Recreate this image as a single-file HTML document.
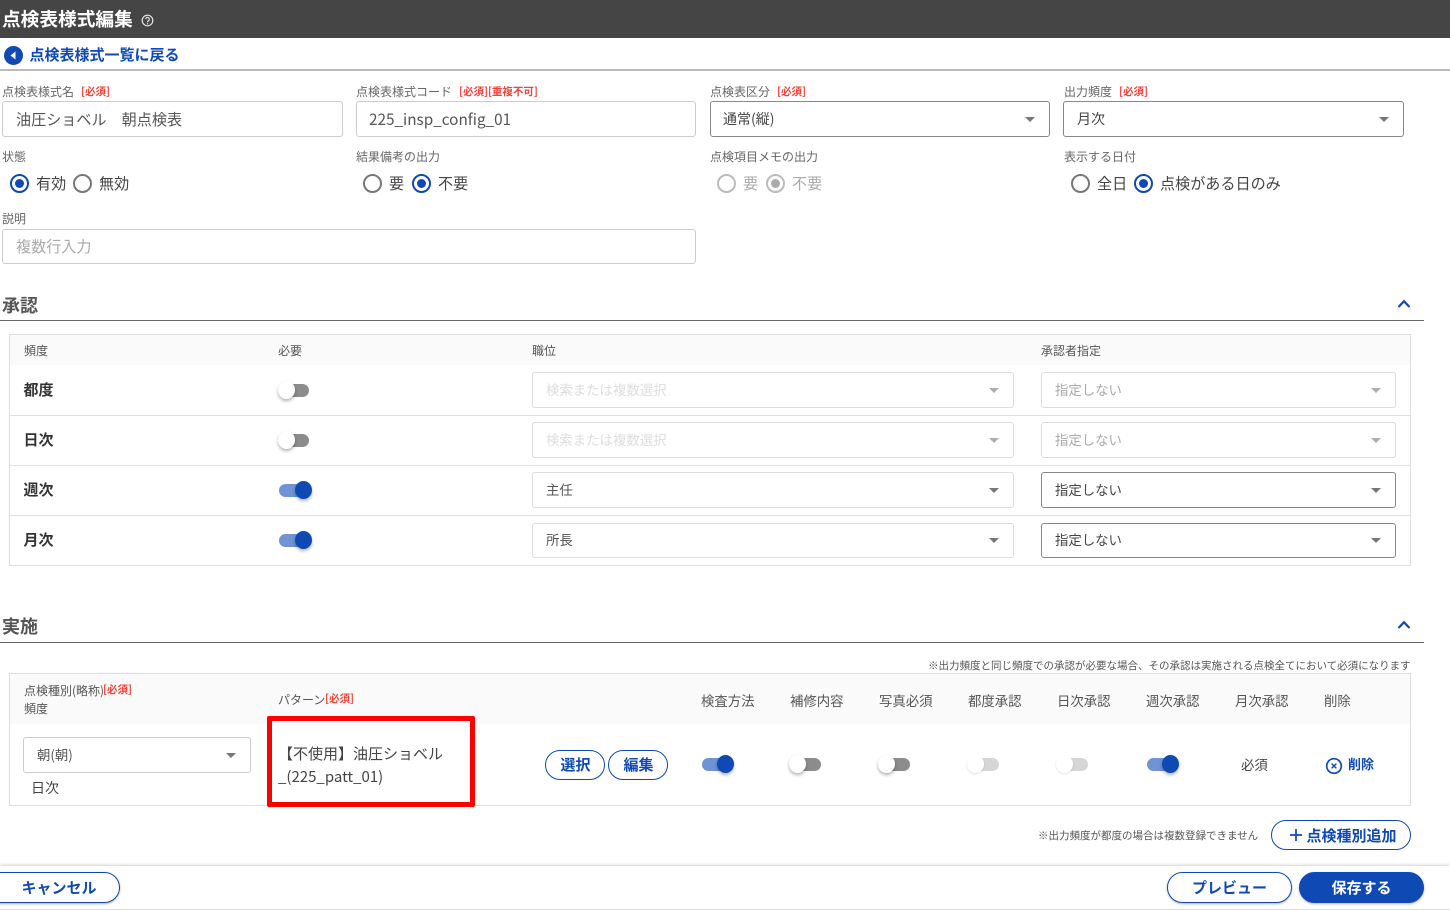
<!DOCTYPE html>
<html lang="ja"><head><meta charset="utf-8"><title>点検表様式編集</title>
<style>
*{box-sizing:border-box}
html,body{margin:0;padding:0;width:1450px;height:910px;overflow:hidden;background:#fff;font-family:"Noto Sans CJK JP","Liberation Sans",sans-serif;color:#444}
.t{position:absolute;white-space:nowrap;line-height:20px}
.l{font-size:12px;color:#666}
.r{font-size:10.5px;font-weight:700;color:#f44336}
.f{font-size:15.1px;color:#444}
.b{position:absolute;background:#fff;border:1px solid #ccc;border-radius:3px}
.s{border-color:#888}
.d{border-color:#ddd}
.a{position:absolute;width:0;height:0;border-left:5px solid transparent;border-right:5px solid transparent;border-top:5px solid #777}
.a.o{opacity:.6}
.rd{position:absolute;width:19px;height:19px;border-radius:50%;border:2px solid #777;background:#fff}
.rd.on{border-color:#0f4ab4}
.rd.on:after{content:"";position:absolute;left:3px;top:3px;width:9px;height:9px;border-radius:50%;background:#0f4ab4}
.rd.dis{border-color:#bbb}
.rd.dis:after{content:"";position:absolute;left:3px;top:3px;width:9px;height:9px;border-radius:50%;background:#aaa}
.tg{position:absolute;width:32px;height:24px}
.tg i{position:absolute;left:1px;top:6px;width:31px;height:13px;border-radius:7px;background:#8c8c8c}
.tg b{position:absolute;left:0;top:3px;width:17px;height:18px;border-radius:50%;background:#fff;box-shadow:0 2px 3px rgba(0,0,0,.3)}
.tg.on i{background:#6f93d4}
.tg.on b{left:16px;background:#0f4ab4}
.tg.off i{background:#d6d6d6}
.tg.off b{box-shadow:0 1px 2px rgba(0,0,0,.12)}
.tg.ap i{width:30px}
.tg.on.ap b{left:17px}
.tg.on.ap i{width:31px}
.hr{position:absolute;left:0;width:1424px;height:1px;background:#666}
.pill{position:absolute;border:1.5px solid #0f4ab4;border-radius:16px;background:#fff;color:#0f4ab4;font-weight:700;text-align:center;font-size:15px}
.line{position:absolute;height:1px;background:#e0e0e0}
.h{font-size:13.4px;color:#555}
.bd{font-size:15px;font-weight:700;color:#333}
.m{font-size:13.4px}
</style></head><body>

<div style="position:absolute;left:0;top:0;width:1450px;height:38px;background:#454545"></div>
<div class="t" style="left:2px;top:9px;font-size:18.7px;font-weight:700;color:#fff">点検表様式編集</div>
<svg style="position:absolute;left:141px;top:14px" width="13" height="13" viewBox="0 0 13 13"><circle cx="6.5" cy="6.5" r="5.3" fill="none" stroke="#e4e4e4" stroke-width="1.2"/><path d="M4.7 5.2a1.8 1.8 0 1 1 2.8 1.5c-.6.4-1 .7-1 1.5" fill="none" stroke="#e4e4e4" stroke-width="1.2"/><circle cx="6.5" cy="9.8" r=".7" fill="#e4e4e4"/></svg>

<svg style="position:absolute;left:4px;top:46px" width="19" height="19" viewBox="0 0 19 19"><circle cx="9.5" cy="9.5" r="9.5" fill="#0f4ab4"/><path d="M11.5 5.5v8l-5-4z" fill="#fff"/></svg>
<div class="t" style="left:29.5px;top:45px;font-size:15px;font-weight:700;color:#0f4ab4">点検表様式一覧に戻る</div>
<div style="position:absolute;left:0;top:69px;width:1450px;height:2px;background:#bbb"></div>

<div class="t l" style="left:2px;top:82px">点検表様式名</div><div class="t r" style="left:81px;top:82px">[必須]</div>
<div class="t l" style="left:356px;top:82px">点検表様式コード</div><div class="t r" style="left:459px;top:82px">[必須][重複不可]</div>
<div class="t l" style="left:710px;top:82px">点検表区分</div><div class="t r" style="left:777px;top:82px">[必須]</div>
<div class="t l" style="left:1064px;top:82px">出力頻度</div><div class="t r" style="left:1119px;top:82px">[必須]</div>

<div class="b" style="left:2px;top:101px;width:341px;height:36px"></div>
<div class="t f" style="left:16px;top:109px;color:#555">油圧ショベル　朝点検表</div>
<div class="b" style="left:356px;top:101px;width:340px;height:36px"></div>
<div class="t f" style="left:369px;top:109px;color:#555;font-size:15.3px">225_insp_config_01</div>
<div class="b s" style="left:710px;top:101px;width:340px;height:36px"></div>
<div class="t" style="left:723px;top:109px;font-size:14px;color:#444">通常(縦)</div><div class="a" style="left:1025px;top:117px"></div>
<div class="b s" style="left:1063px;top:101px;width:341px;height:36px"></div>
<div class="t" style="left:1077px;top:109px;font-size:14px;color:#444">月次</div><div class="a" style="left:1379px;top:117px"></div>

<div class="t l" style="left:2px;top:147px">状態</div>
<div class="t l" style="left:356px;top:147px">結果備考の出力</div>
<div class="t l" style="left:710px;top:147px">点検項目メモの出力</div>
<div class="t l" style="left:1064px;top:147px">表示する日付</div>

<div class="rd on" style="left:10px;top:174px"></div><div class="t f" style="left:36px;top:173px">有効</div>
<div class="rd" style="left:73px;top:174px"></div><div class="t f" style="left:99px;top:173px">無効</div>
<div class="rd" style="left:363px;top:174px"></div><div class="t f" style="left:389px;top:173px">要</div>
<div class="rd on" style="left:412px;top:174px"></div><div class="t f" style="left:438px;top:173px">不要</div>
<div class="rd dis" style="left:717px;top:174px"></div><div class="t f" style="left:743px;top:173px;color:#aaa">要</div>
<div class="rd dis" style="left:766px;top:174px"></div><div class="t f" style="left:792px;top:173px;color:#aaa">不要</div>
<div class="rd" style="left:1071px;top:174px"></div><div class="t f" style="left:1097px;top:173px">全日</div>
<div class="rd on" style="left:1134px;top:174px"></div><div class="t f" style="left:1160px;top:173px">点検がある日のみ</div>
<div style="position:absolute;left:720px;top:177px;width:13px;height:13px;background:#fff;border-radius:50%"></div>

<div class="t l" style="left:2px;top:209px">説明</div>
<div class="b" style="left:2px;top:229px;width:694px;height:35px"></div>
<div class="t f" style="left:16px;top:236px;color:#aaa">複数行入力</div>

<div class="t" style="left:2px;top:295px;font-size:18px;font-weight:700;color:#555">承認</div>
<svg style="position:absolute;left:1397px;top:298px" width="14" height="11" viewBox="0 0 14 11"><path d="M1.5 9L7 3.2 12.5 9" fill="none" stroke="#0f4ab4" stroke-width="2.2"/></svg>
<div class="hr" style="top:320px"></div>

<div style="position:absolute;left:9px;top:334px;width:1402px;height:232px;border:1px solid #ddd"></div>
<div style="position:absolute;left:10px;top:335px;width:1400px;height:30px;background:#fafafa"></div>
<div class="t l" style="left:24px;top:341px;color:#555">頻度</div>
<div class="t l" style="left:278px;top:341px;color:#555">必要</div>
<div class="t l" style="left:532px;top:341px;color:#555">職位</div>
<div class="t l" style="left:1041px;top:341px;color:#555">承認者指定</div>
<div class="line" style="left:10px;top:415px;width:1400px"></div>
<div class="line" style="left:10px;top:465px;width:1400px"></div>
<div class="line" style="left:10px;top:515px;width:1400px"></div>

<div class="t bd" style="left:23.5px;top:380px">都度</div>
<div class="t bd" style="left:23.5px;top:430px">日次</div>
<div class="t bd" style="left:23.5px;top:480px">週次</div>
<div class="t bd" style="left:23.5px;top:530px">月次</div>

<div class="tg ap" style="left:278px;top:378px"><i></i><b></b></div>
<div class="tg ap" style="left:278px;top:428px"><i></i><b></b></div>
<div class="tg on ap" style="left:278px;top:478px"><i></i><b></b></div>
<div class="tg on ap" style="left:278px;top:528px"><i></i><b></b></div>

<div class="b d" style="left:532px;top:372px;width:482px;height:36px"></div>
<div class="t m" style="left:546px;top:379px;color:#ddd">検索または複数選択</div><div class="a o" style="left:989px;top:388px"></div>
<div class="b d" style="left:532px;top:422px;width:482px;height:36px"></div>
<div class="t m" style="left:546px;top:429px;color:#ddd">検索または複数選択</div><div class="a o" style="left:989px;top:438px"></div>
<div class="b d" style="left:532px;top:472px;width:482px;height:36px"></div>
<div class="t m" style="left:546px;top:479px;color:#555">主任</div><div class="a" style="left:989px;top:488px"></div>
<div class="b d" style="left:532px;top:523px;width:482px;height:35px"></div>
<div class="t m" style="left:546px;top:529px;color:#555">所長</div><div class="a" style="left:989px;top:538px"></div>

<div class="b d" style="left:1041px;top:372px;width:355px;height:36px"></div>
<div class="t m" style="left:1055px;top:379px;color:#aaa">指定しない</div><div class="a o" style="left:1371px;top:388px"></div>
<div class="b d" style="left:1041px;top:422px;width:355px;height:36px"></div>
<div class="t m" style="left:1055px;top:429px;color:#aaa">指定しない</div><div class="a o" style="left:1371px;top:438px"></div>
<div class="b s" style="left:1041px;top:472px;width:355px;height:36px"></div>
<div class="t m" style="left:1055px;top:479px;color:#444">指定しない</div><div class="a" style="left:1371px;top:488px"></div>
<div class="b s" style="left:1041px;top:523px;width:355px;height:35px"></div>
<div class="t m" style="left:1055px;top:529px;color:#444">指定しない</div><div class="a" style="left:1371px;top:538px"></div>

<div class="t" style="left:2px;top:616px;font-size:18px;font-weight:700;color:#555">実施</div>
<svg style="position:absolute;left:1397px;top:619px" width="14" height="11" viewBox="0 0 14 11"><path d="M1.5 9L7 3.2 12.5 9" fill="none" stroke="#0f4ab4" stroke-width="2.2"/></svg>
<div class="hr" style="top:642px"></div>
<div class="t" style="left:928px;top:656px;font-size:10.5px;color:#555">※出力頻度と同じ頻度での承認が必要な場合、その承認は実施される点検全てにおいて必須になります</div>

<div style="position:absolute;left:9px;top:673px;width:1402px;height:133px;border:1px solid #ddd"></div>
<div style="position:absolute;left:10px;top:674px;width:1400px;height:50px;background:#fafafa"></div>
<div class="t l" style="left:24px;top:681px;color:#555">点検種別(略称)</div><div class="t r" style="left:103px;top:680px">[必須]</div>
<div class="t l" style="left:24px;top:699px;color:#555">頻度</div>
<div class="t l" style="left:278px;top:690px;color:#555">パターン</div><div class="t r" style="left:325px;top:689px">[必須]</div>
<div class="t h" style="left:701px;top:690px">検査方法</div>
<div class="t h" style="left:790px;top:690px">補修内容</div>
<div class="t h" style="left:879px;top:690px">写真必須</div>
<div class="t h" style="left:968px;top:690px">都度承認</div>
<div class="t h" style="left:1057px;top:690px">日次承認</div>
<div class="t h" style="left:1146px;top:690px">週次承認</div>
<div class="t h" style="left:1235px;top:690px">月次承認</div>
<div class="t h" style="left:1324px;top:690px">削除</div>

<div class="b d" style="left:23px;top:737px;width:228px;height:36px;border-color:#ccc"></div>
<div class="t m" style="left:37px;top:744px;color:#555">朝(朝)</div><div class="a" style="left:226px;top:753px"></div>
<div class="t" style="left:31px;top:778px;font-size:14px;color:#444">日次</div>

<div style="position:absolute;left:267px;top:716px;width:208px;height:91px;border:5px solid #f00;border-radius:2px"></div>
<div class="t" style="left:278px;top:744px;font-size:15px;color:#444">【不使用】油圧ショベル</div>
<div class="t" style="left:278px;top:767px;font-size:15px;color:#444">_(225_patt_01)</div>

<div class="pill" style="left:545px;top:750px;width:60px;height:30px;line-height:28px;padding-left:1px">選択</div>
<div class="pill" style="left:608px;top:750px;width:60px;height:30px;line-height:28px;padding-left:1px">編集</div>

<div class="tg on" style="left:701px;top:752px"><i></i><b></b></div>
<div class="tg" style="left:789px;top:752px"><i></i><b></b></div>
<div class="tg" style="left:878px;top:752px"><i></i><b></b></div>
<div class="tg off" style="left:967px;top:752px"><i></i><b></b></div>
<div class="tg off" style="left:1056px;top:752px"><i></i><b></b></div>
<div class="tg on" style="left:1146px;top:752px"><i></i><b></b></div>
<div class="t m" style="left:1241px;top:754px;color:#444">必須</div>
<svg style="position:absolute;left:1325px;top:757px" width="18" height="18" viewBox="0 0 18 18"><circle cx="9" cy="9" r="7.3" fill="none" stroke="#0f4ab4" stroke-width="1.7"/><path d="M6.6 6.6l4.8 4.8M11.4 6.6l-4.8 4.8" stroke="#0f4ab4" stroke-width="1.4"/></svg>
<div class="t" style="left:1348px;top:754px;font-size:13px;font-weight:700;color:#0f4ab4">削除</div>

<div class="t" style="left:1038px;top:826px;font-size:10.5px;color:#555">※出力頻度が都度の場合は複数登録できません</div>
<div class="pill" style="left:1271px;top:820px;width:140px;height:30px"></div>
<svg style="position:absolute;left:1289px;top:828px" width="14" height="14" viewBox="0 0 14 14"><path d="M7 1v12M1 7h12" stroke="#0f4ab4" stroke-width="1.7"/></svg>
<div class="t" style="left:1306.5px;top:826px;font-size:15px;font-weight:700;color:#0f4ab4">点検種別追加</div>

<div style="position:absolute;left:0;top:866px;width:1450px;height:44px;background:#fff;box-shadow:0 -1px 3px rgba(0,0,0,.18)"></div>
<div style="position:absolute;left:0;top:909px;width:1450px;height:1px;background:#ddd"></div>
<div class="pill" style="left:-34px;top:872px;width:154px;height:31px;line-height:30px;padding-left:32px;box-shadow:0 1px 2px rgba(0,0,0,.3)">キャンセル</div>
<div class="pill" style="left:1167px;top:872px;width:125px;height:31px;line-height:30px;box-shadow:0 1px 2px rgba(0,0,0,.3)">プレビュー</div>
<div class="pill" style="left:1299px;top:872px;width:125px;height:31px;line-height:30px;background:#0f4ab4;color:#fff;box-shadow:0 1px 2px rgba(0,0,0,.3)">保存する</div>
</body></html>
